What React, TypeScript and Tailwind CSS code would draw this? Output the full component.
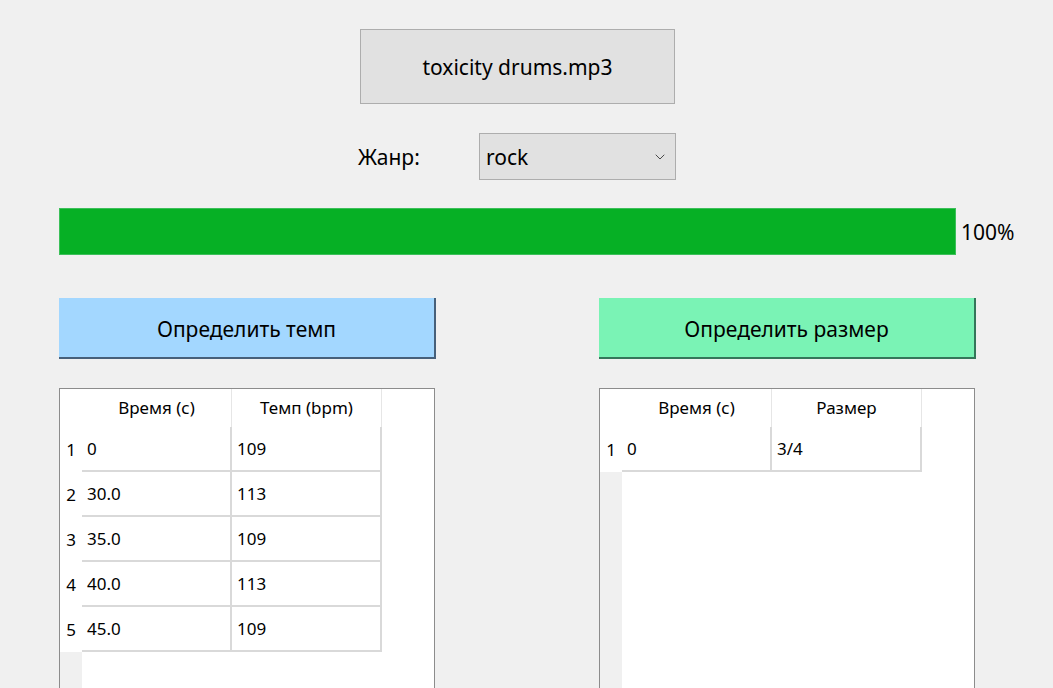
import { ChevronDown } from "lucide-react";

const tempoRows = [
  ["0", "109"],
  ["30.0", "113"],
  ["35.0", "109"],
  ["40.0", "113"],
  ["45.0", "109"],
];

const meterRows = [["0", "3/4"]];

function DataTable({ headers, rows }: { headers: string[]; rows: string[][] }) {
  return (
    <div className="w-[376px] h-[310px] border border-[#8c8c8c] bg-white flex">
      <div className="w-[22px] flex flex-col">
        <div className="h-[38px] bg-white" />
        {rows.map((_, i) => (
          <div key={i} className="h-[45px] bg-white flex items-center justify-center text-[17px] text-black">
            {i + 1}
          </div>
        ))}
        <div className="flex-1 bg-[#f0f0f0]" />
      </div>
      <div className="flex flex-col">
        <div className="h-[38px] flex">
          {headers.map((h) => (
            <div key={h} className="w-[150px] border-r border-[#e6e6e6] flex items-center justify-center text-[17px] text-black">
              {h}
            </div>
          ))}
        </div>
        {rows.map((r, i) => (
          <div key={i} className="h-[45px] flex border-b-2 border-[#d9d9d9]">
            {r.map((c, j) => (
              <div key={j} className="w-[150px] border-r-2 border-[#d9d9d9] flex items-center pl-[5px] text-[17px] text-black">
                {c}
              </div>
            ))}
          </div>
        ))}
      </div>
    </div>
  );
}

export default function App() {
  return (
    <div
      className="w-[1053px] h-[688px] bg-[#f0f0f0] overflow-hidden text-black"
      style={{ fontFamily: '"Noto Sans", "Open Sans", sans-serif' }}
    >
      <div className="pt-[29px] pl-[360px]">
        <button className="w-[315px] h-[75px] bg-[#e1e1e1] border border-[#adadad] text-[21px] flex items-center justify-center pt-[2px]">
          toxicity drums.mp3
        </button>
      </div>

      <div className="mt-[29px] pl-[358px] flex items-center">
        <span className="w-[121px] text-[21px] pt-[3px]">Жанр:</span>
        <div className="w-[197px] h-[47px] bg-[#e1e1e1] border border-[#adadad] flex items-center justify-between pl-[6px] pr-[7px]">
          <span className="text-[21px] pt-[3px]">rock</span>
          <ChevronDown size={16} strokeWidth={1.3} className="text-[#333]" />
        </div>
      </div>

      <div className="mt-[28px] pl-[59px] flex items-center">
        <div className="w-[897px] h-[47px] bg-[#06b025] border border-[#3cbf5a]" />
        <span className="ml-[5px] text-[21px] pt-[3px]">100%</span>
      </div>

      <div className="mt-[43px] pl-[59px] flex gap-[163px]">
        <button className="w-[377px] h-[61px] bg-[#a3d7ff] border-r-2 border-b-2 border-[#47607a] text-[21px] flex items-center justify-center pt-[4px]">
          Определить темп
        </button>
        <button className="w-[377px] h-[61px] bg-[#7af3b5] border-r-2 border-b-2 border-[#35765a] text-[21px] flex items-center justify-center pt-[4px]">
          Определить размер
        </button>
      </div>

      <div className="mt-[29px] pl-[59px] flex gap-[164px]">
        <DataTable headers={["Время (с)", "Темп (bpm)"]} rows={tempoRows} />
        <DataTable headers={["Время (с)", "Размер"]} rows={meterRows} />
      </div>
    </div>
  );
}
